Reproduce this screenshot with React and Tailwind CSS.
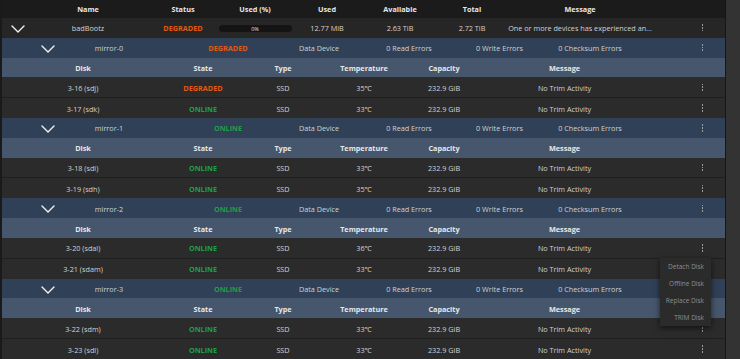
import React from 'react';

const ORANGE = 'text-[#e35a14]';
const GREEN = 'text-[#1f9f4a]';

const mirrors = [
  {
    name: 'mirror-0',
    state: 'DEGRADED',
    disks: [
      { disk: '3-16 (sdj)', state: 'DEGRADED', temp: '35℃' },
      { disk: '3-17 (sdk)', state: 'ONLINE', temp: '33℃' },
    ],
  },
  {
    name: 'mirror-1',
    state: 'ONLINE',
    disks: [
      { disk: '3-18 (sdi)', state: 'ONLINE', temp: '33℃' },
      { disk: '3-19 (sdh)', state: 'ONLINE', temp: '35℃' },
    ],
  },
  {
    name: 'mirror-2',
    state: 'ONLINE',
    disks: [
      { disk: '3-20 (sdal)', state: 'ONLINE', temp: '36℃', menu: true },
      { disk: '3-21 (sdam)', state: 'ONLINE', temp: '33℃' },
    ],
  },
  {
    name: 'mirror-3',
    state: 'ONLINE',
    disks: [
      { disk: '3-22 (sdm)', state: 'ONLINE', temp: '33℃' },
      { disk: '3-23 (sdl)', state: 'ONLINE', temp: '33℃' },
    ],
  },
];

function Cell({ w, children, className = '' }) {
  return (
    <div className={`${w} shrink-0 flex justify-center items-center whitespace-nowrap pt-[2px] ${className}`}>
      {children}
    </div>
  );
}

function Chevron() {
  return (
    <svg width="14" height="8" viewBox="0 0 14 8" fill="none">
      <path d="M1 1 L7 7 L13 1" stroke="#f2f2f2" strokeWidth="1.4" strokeLinecap="round" strokeLinejoin="round" />
    </svg>
  );
}

// 케밥 메뉴 아이콘
function Kebab() {
  return (
    <div className="flex-1 flex justify-end pr-[22px]">
      <div className="flex flex-col gap-[1px]">
        <span className="w-[1.5px] h-[1.8px] bg-[#9a9a9a]" />
        <span className="w-[1.5px] h-[1.8px] bg-[#9a9a9a]" />
        <span className="w-[1.5px] h-[1.8px] bg-[#9a9a9a]" />
      </div>
    </div>
  );
}

function stateColor(s) {
  return s === 'DEGRADED' ? ORANGE : GREEN;
}

function DiskMenu() {
  return (
    <div className="absolute top-full right-[14px] z-10 w-[51px] bg-[#2b2b2b] shadow-[0_2px_6px_rgba(0,0,0,0.6)] text-[6.5px] text-[#8e8e8e] text-right pr-[7px]">
      <div className="h-[17px] leading-[17px]">Detach Disk</div>
      <div className="h-[17px] leading-[17px]">Offline Disk</div>
      <div className="h-[17px] leading-[17px]">Replace Disk</div>
      <div className="h-[17px] leading-[17px]">TRIM Disk</div>
    </div>
  );
}

function DiskHeader() {
  return (
    <div className="h-[20px] flex items-center bg-[#46566c] font-bold text-[#e8e8e8]">
      <Cell w="w-[162px]">Disk</Cell>
      <Cell w="w-[78px]">State</Cell>
      <Cell w="w-[82px]">Type</Cell>
      <Cell w="w-[80px]">Temperature</Cell>
      <Cell w="w-[80px]">Capacity</Cell>
      <Cell w="w-[161px]">Message</Cell>
    </div>
  );
}

function DiskRow({ d, first }) {
  return (
    <div className={`relative flex items-center bg-[#2b2b2b] ${first ? 'h-[21px] border-b border-[#1f1f1f]' : 'h-[20px]'}`}>
      <Cell w="w-[162px]">{d.disk}</Cell>
      <Cell w="w-[78px]" className={`font-bold ${stateColor(d.state)}`}>{d.state}</Cell>
      <Cell w="w-[82px]">SSD</Cell>
      <Cell w="w-[80px]">{d.temp}</Cell>
      <Cell w="w-[80px]">232.9 GiB</Cell>
      <Cell w="w-[161px]">No Trim Activity</Cell>
      <Kebab />
      {d.menu && <DiskMenu />}
    </div>
  );
}

function MirrorRow({ m }) {
  return (
    <div className="h-[20px] flex items-center bg-[#304056]">
      <div className="w-[28px] shrink-0" />
      <Cell w="w-[36px]"><Chevron /></Cell>
      <Cell w="w-[86px]">{m.name}</Cell>
      <div className="w-[36px] shrink-0" />
      <Cell w="w-[80px]" className={`font-bold ${stateColor(m.state)}`}>{m.state}</Cell>
      <Cell w="w-[102px]">Data Device</Cell>
      <Cell w="w-[78px]">0 Read Errors</Cell>
      <Cell w="w-[103px]">0 Write Errors</Cell>
      <Cell w="w-[78px]">0 Checksum Errors</Cell>
      <Kebab />
    </div>
  );
}

export default function App() {
  return (
    <div className="w-[740px] h-[359px] overflow-hidden flex bg-[#1a1a1a] text-[7.25px] text-[#d2d2d2]" style={{ fontFamily: '"Open Sans", "Noto Sans", sans-serif' }}>
      <div className="w-[2px] shrink-0" />
      <div className="w-[723px] shrink-0 flex flex-col">
        {/* 풀 헤더 */}
        <div className="h-[18px] flex items-center bg-[#1b1b1b] font-bold text-[#e8e8e8]">
          <div className="w-[32px] shrink-0" />
          <Cell w="w-[108px]">Name</Cell>
          <Cell w="w-[82px]">Status</Cell>
          <Cell w="w-[62px]">Used (%)</Cell>
          <Cell w="w-[82px]">Used</Cell>
          <Cell w="w-[64px]">Available</Cell>
          <Cell w="w-[80px]">Total</Cell>
          <Cell w="w-[136px]">Message</Cell>
        </div>

        {/* 풀 행 */}
        <div className="h-[20px] flex items-center bg-[#262626]">
          <Cell w="w-[32px]"><Chevron /></Cell>
          <Cell w="w-[108px]">badBootz</Cell>
          <Cell w="w-[82px]" className={`font-bold ${ORANGE}`}>DEGRADED</Cell>
          <Cell w="w-[62px]">
            <div className="w-[73px] h-[7px] shrink-0 rounded-full bg-[#141414] flex items-center justify-center text-[5.5px] text-[#e0e0e0]">
              0%
            </div>
          </Cell>
          <Cell w="w-[82px]">12.77 MiB</Cell>
          <Cell w="w-[64px]">2.63 TiB</Cell>
          <Cell w="w-[80px]">2.72 TiB</Cell>
          <Cell w="w-[136px]">One or more devices has experienced an...</Cell>
          <Kebab />
        </div>

        {mirrors.map((m) => (
          <React.Fragment key={m.name}>
            <MirrorRow m={m} />
            <DiskHeader />
            {m.disks.map((d, i) => (
              <DiskRow key={d.disk} d={d} first={i === 0} />
            ))}
          </React.Fragment>
        ))}
      </div>
      <div className="w-[1px] shrink-0 bg-[#161616]" />
      <div className="flex-1 bg-[#333333]" />
    </div>
  );
}
